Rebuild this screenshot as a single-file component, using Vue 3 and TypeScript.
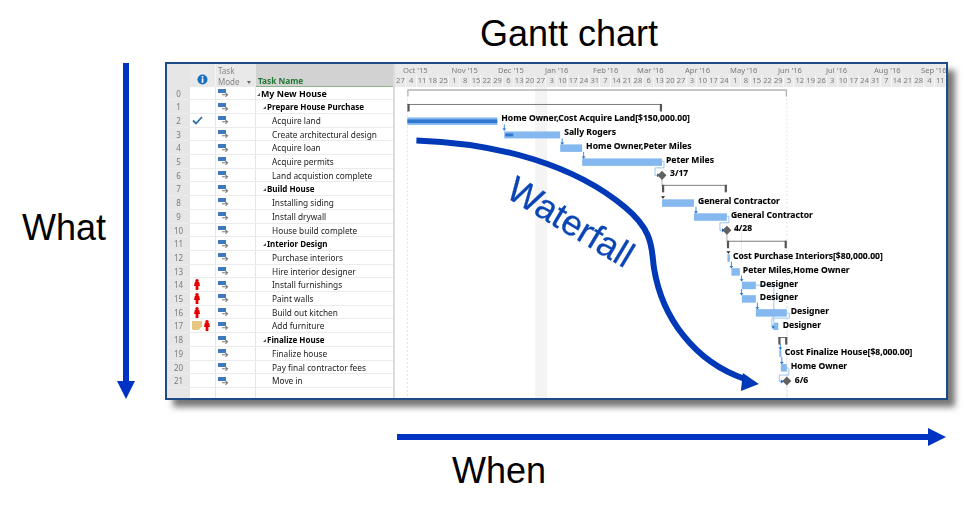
<script setup lang="ts">
interface Task { name: string; kind: 'root' | 'sum' | 'leaf'; done?: boolean; note?: boolean; person?: boolean }
interface Bar { x: number; y: number; w: number; h: number }
interface Label { x: number; y: number; t: string }

const tasks: Task[] = [
  { name: 'My New House', kind: 'root' },
  { name: 'Prepare House Purchase', kind: 'sum' },
  { name: 'Acquire land', kind: 'leaf', done: true },
  { name: 'Create architectural design', kind: 'leaf' },
  { name: 'Acquire loan', kind: 'leaf' },
  { name: 'Acquire permits', kind: 'leaf' },
  { name: 'Land acquistion complete', kind: 'leaf' },
  { name: 'Build House', kind: 'sum' },
  { name: 'Installing siding', kind: 'leaf' },
  { name: 'Install drywall', kind: 'leaf' },
  { name: 'House build complete', kind: 'leaf' },
  { name: 'Interior Design', kind: 'sum' },
  { name: 'Purchase interiors', kind: 'leaf' },
  { name: 'Hire interior designer', kind: 'leaf' },
  { name: 'Install furnishings', kind: 'leaf', person: true },
  { name: 'Paint walls', kind: 'leaf', person: true },
  { name: 'Build out kitchen', kind: 'leaf', person: true },
  { name: 'Add furniture', kind: 'leaf', note: true, person: true },
  { name: 'Finalize House', kind: 'sum' },
  { name: 'Finalize house', kind: 'leaf' },
  { name: 'Pay final contractor fees', kind: 'leaf' },
  { name: 'Move in', kind: 'leaf' },
]

const months = [
  { t: "Oct '15", w: 48.5 }, { t: "Nov '15", w: 46.5 }, { t: "Dec '15", w: 47 }, { t: "Jan '16", w: 48 },
  { t: "Feb '16", w: 44 }, { t: "Mar '16", w: 48 }, { t: "Apr '16", w: 45 }, { t: "May '16", w: 48 },
  { t: "Jun '16", w: 48 }, { t: "Jul '16", w: 48 }, { t: "Aug '16", w: 47 }, { t: "Sep '16", w: 26 },
]

const days: number[] = Array.from({ length: 51 }, (_, i) => new Date(2015, 8, 27 + i * 7).getDate())

const bars: Bar[] = [
  { x: 407, y: 117, w: 90, h: 7.5 }, { x: 504, y: 131, w: 56, h: 7 }, { x: 560, y: 144, w: 22, h: 7.5 },
  { x: 582, y: 158, w: 80, h: 7.5 }, { x: 662, y: 199, w: 32, h: 7.5 }, { x: 694, y: 213, w: 33, h: 7.5 },
  { x: 727.5, y: 254, w: 2.5, h: 7.5 }, { x: 731.5, y: 268, w: 8.5, h: 7.5 }, { x: 742, y: 281.5, w: 14, h: 7.5 },
  { x: 742, y: 295, w: 14, h: 7.5 }, { x: 756, y: 309, w: 31, h: 7.5 }, { x: 773.5, y: 322.5, w: 5, h: 7.5 },
  { x: 779.5, y: 349.5, w: 2, h: 7.5 }, { x: 781, y: 364, w: 6, h: 7.5 },
]
const doneBars: Bar[] = [{ x: 407, y: 119, w: 90, h: 3.6 }, { x: 505, y: 133, w: 8, h: 3 }]
const summaries = [
  { x1: 407, x2: 662, y: 104, c: '#7c7c7c' }, { x1: 662, x2: 727, y: 185, c: '#7c7c7c' },
  { x1: 727, x2: 787, y: 241, c: '#7c7c7c' }, { x1: 778.5, x2: 787.5, y: 337.5, c: '#666' },
]
const diamonds = [{ x: 662, y: 175 }, { x: 727, y: 230 }, { x: 787, y: 381 }]
const links: string[] = [
  '504 124 504 130', '562 138 562 144', '583.5 151.5 583.5 158', '696 206.5 696 213',
  '731.5 261.5 731.5 268', '741.7 275.5 741.7 281', '741.7 289 741.7 295', '757.5 302.5 757.5 309',
  '780.5 344 780.5 349.5', '782 357 782 364',
]
const loops: string[] = [
  '662 161 664 161 664 167.5 655 167.5 655 175 659 175',
  '727 216 729 216 729 222.5 720 222.5 720 230 724 230',
  '787 313 789.5 313 789.5 318 772 318 772 327 774 327',
  '787 368 789 368 789 375 779.5 375 779.5 381.5 783 381.5',
  '756 285 774 285 774 322',
]
const heads = [
  [504, 130], [562, 144], [583.5, 158], [696, 213], [731.5, 268], [741.7, 281], [741.7, 295], [757.5, 309],
  [780.5, 349.5], [782, 364],
]
const labels: Label[] = [
  { x: 501, y: 121, t: 'Home Owner,Cost Acquire Land[$150,000.00]' },
  { x: 564, y: 135, t: 'Sally Rogers' },
  { x: 586, y: 149, t: 'Home Owner,Peter Miles' },
  { x: 666, y: 163, t: 'Peter Miles' },
  { x: 670, y: 176, t: '3/17' },
  { x: 698, y: 204, t: 'General Contractor' },
  { x: 731, y: 218, t: 'General Contractor' },
  { x: 734, y: 231, t: '4/28' },
  { x: 733, y: 259, t: 'Cost Purchase Interiors[$80,000.00]' },
  { x: 743, y: 273, t: 'Peter Miles,Home Owner' },
  { x: 760, y: 287, t: 'Designer' },
  { x: 760, y: 300, t: 'Designer' },
  { x: 791, y: 314, t: 'Designer' },
  { x: 783, y: 328, t: 'Designer' },
  { x: 785, y: 355, t: 'Cost Finalize House[$8,000.00]' },
  { x: 791, y: 369, t: 'Home Owner' },
  { x: 795, y: 383, t: '6/6' },
]
</script>

<template>
  <div class="page">
    <div class="title">Gantt chart</div>

    <div class="middle">
      <div class="side">
        <div class="what">What</div>
        <svg class="down" width="18" height="336" viewBox="0 0 18 336">
          <path d="M6 0H12V318H18L9 336L0 318H6Z" fill="#0033c4" />
        </svg>
      </div>

      <div class="frame">
        <div class="sheet">
          <div class="head">
            <div class="c-num"></div>
            <div class="c-ind">
              <svg width="11" height="11" viewBox="0 0 11 11">
                <circle cx="5.5" cy="5.5" r="5" fill="#1b6ec2" />
                <rect x="4.7" y="2" width="1.7" height="1.6" fill="#fff" />
                <rect x="4.7" y="4.4" width="1.7" height="4.4" fill="#fff" />
              </svg>
            </div>
            <div class="c-mode mode-h">
              <span>Task</span>
              <span>Mode <i class="caret"></i></span>
            </div>
            <div class="c-name name-h">Task Name</div>
          </div>

          <div v-for="(t, i) in tasks" :key="t.name" class="row">
            <div class="c-num">{{ i }}</div>
            <div class="c-ind">
              <svg v-if="t.done" width="11" height="9" viewBox="0 0 11 9">
                <path d="M1 4.5L4 7.5L10 1" fill="none" stroke="#2f6da8" stroke-width="1.8" />
              </svg>
              <svg v-if="t.note" width="10" height="9" viewBox="0 0 10 9">
                <path d="M0 0H10V5.5L6.5 9H1L0 8Z" fill="#e7c67f" />
              </svg>
              <svg v-if="t.person" :class="{ solo: !t.note }" width="6" height="11" viewBox="0 0 6 11">
                <circle cx="3" cy="1.8" r="1.8" fill="#e80000" />
                <path d="M0.8 3H5.2L6 7H4.4V11H1.6V7H0Z" fill="#e80000" />
              </svg>
            </div>
            <div class="c-mode">
              <svg width="11" height="8" viewBox="0 0 11 8">
                <rect x="0" y="0" width="8" height="4" fill="#3f78bd" />
                <path d="M4 5.8H9M7.4 3.8L9.6 5.8L7.4 7.8" fill="none" stroke="#7d7d7d" stroke-width="1.1" />
              </svg>
            </div>
            <div class="c-name" :class="t.kind">
              <i v-if="t.kind !== 'leaf'" class="tri"></i>{{ t.name }}
            </div>
          </div>

          <div class="row filler">
            <div class="c-num"></div>
            <div class="c-ind"></div>
            <div class="c-mode"></div>
            <div class="c-name"></div>
          </div>
        </div>

        <div class="split"></div>

        <div class="chart">
          <div class="scale">
            <div class="months">
              <span v-for="m in months" :key="m.t" :style="{ width: m.w + 'px' }">{{ m.t }}</span>
            </div>
            <div class="days">
              <span v-for="(d, i) in days" :key="i">{{ d }}</span>
            </div>
          </div>

          <svg class="canvas" width="550" height="312" viewBox="395 86.5 550 312">
            <rect x="535" y="86.5" width="12" height="312" fill="#f4f4f4" />
            <path d="M407 90V398M787 90V398" stroke="#e2e2e2" stroke-dasharray="2 2" fill="none" />
            <path d="M741.7 232V262M787 330V398" stroke="#ececec" fill="none" />
            <path d="M662 175V186M727 230V241" stroke="#bdbdbd" stroke-width="1.2" fill="none" />

            <path d="M407.5 96V89.5H786.5V96" fill="none" stroke="#b4b4b4" stroke-width="1.3" />
            <g v-for="s in summaries" :key="s.x1">
              <path :d="`M${s.x1} ${s.y}H${s.x2}`" :stroke="s.c" stroke-width="1" />
              <rect :x="s.x1" :y="s.y - 0.5" width="2.2" height="7.5" fill="#555" />
              <rect :x="s.x2 - 2.2" :y="s.y - 0.5" width="2.2" height="7.5" fill="#555" />
            </g>

            <polyline v-for="l in loops" :key="l" :points="l" fill="none" stroke="#9cc4f2" stroke-width="1" />
            <rect v-for="b in bars" :key="b.x + '-' + b.y" :x="b.x" :y="b.y" :width="b.w" :height="b.h" fill="#86b8f0" />
            <rect v-for="b in doneBars" :key="b.x" :x="b.x" :y="b.y" :width="b.w" :height="b.h" fill="#2f78cf" />
            <polyline v-for="l in links" :key="l" :points="l" fill="none" stroke="#3f8be0" stroke-width="1" />
            <path v-for="h in heads" :key="h[0]" :d="`M${h[0] - 2} ${h[1] - 2}H${h[0] + 2}L${h[0]} ${h[1]}Z`" fill="#1f6fd0" />
            <path d="M661 196H665L663 198.5ZM726.5 251H730.5L728.5 253.5Z" fill="#222" />
            <path d="M657 173V177L660 175ZM722 228V232L725 230ZM781 379.5V383.5L784 381.5ZM772.5 325V329L775 327Z" fill="#1f6fd0" />

            <rect v-for="d in diamonds" :key="d.x" :x="d.x - 3.2" :y="d.y - 3.2" width="6.4" height="6.4" fill="#616161"
              :transform="`rotate(45 ${d.x} ${d.y})`" />

            <text v-for="l in labels" :key="l.x + l.t" :x="l.x" :y="l.y" class="lab">{{ l.t }}</text>

            <path d="M416 140C500 143 575 165 625 207C655 232 651 250 654 268C662 318 695 362 745 379" fill="none"
              stroke="#0039b8" stroke-width="6" />
            <path d="M743 373L759 384L741 391Z" fill="#0039b8" />
            <text x="504" y="196" transform="rotate(31 504 196)" class="fall">Waterfall</text>
          </svg>
        </div>
      </div>
    </div>

    <div class="bottom">
      <svg class="right" width="549" height="18" viewBox="0 0 549 18">
        <path d="M0 6H531V0L549 9L531 18V12H0Z" fill="#0033c4" />
      </svg>
      <div class="when">When</div>
    </div>
  </div>
</template>

<style>
html, body { margin: 0; background: #fff; }
</style>

<style scoped>
.page {
  width: 964px;
  height: 512px;
  overflow: hidden;
  font-family: "Liberation Sans", Arial, sans-serif;
  color: #000;
  background: #fff;
}
.title {
  height: 62px;
  padding-left: 480px;
  box-sizing: border-box;
  font-size: 36px;
  line-height: 68px;
}
.middle { display: flex; height: 338px; isolation: isolate; }
.side { width: 165px; display: flex; flex: none; box-sizing: border-box; padding-left: 22px; }
.what { width: 84px; font-size: 36px; line-height: 40px; margin-top: 146px; }
.down { margin: 1px 0 0 11px; flex: none; }
.frame {
  position: relative;
  width: 783px;
  height: 338px;
  box-sizing: border-box;
  border: 2px solid #1c4b86;
  display: flex;
  background: #fff;
  font-family: "Noto Sans", "Open Sans", sans-serif;
}
.frame::before {
  content: "";
  position: absolute;
  top: 6px;
  left: 6px;
  right: -9px;
  bottom: -9px;
  background: #777;
  filter: blur(3px);
  z-index: -1;
}
.sheet { width: 226px; flex: none; display: flex; flex-direction: column; background: #fff; filter: blur(0.25px); }
.head { display: flex; height: 22.5px; flex: none; background: #e9e9e9; }
.row { display: flex; height: 13.71px; flex: none; border-bottom: 1px solid #ebebeb; box-sizing: border-box; }
.filler { flex: 1; border-bottom: 0; }
.c-num {
  width: 23px;
  flex: none;
  background: #e6e6e6;
  color: #7b7b7b;
  font-size: 8px;
  line-height: 14px;
  text-align: center;
}
.c-ind {
  width: 26px;
  flex: none;
  box-sizing: border-box;
  border-right: 1px solid #e4e4e4;
  display: flex;
  align-items: center;
  justify-content: flex-start;
  padding-left: 2px;
  gap: 2px;
}
.solo { margin-left: 1.5px; }
.c-mode {
  width: 40px;
  flex: none;
  box-sizing: border-box;
  border-right: 1px solid #e4e4e4;
  padding-left: 2px;
  display: flex;
  align-items: center;
}
.c-name {
  width: 137px;
  flex: none;
  font-size: 8.3px;
  line-height: 14px;
  color: #222;
  white-space: nowrap;
  box-sizing: border-box;
  padding-left: 16px;
}
.c-name.root { padding-left: 1px; font-weight: 700; font-size: 8.9px; color: #000; }
.c-name.sum { padding-left: 7px; font-weight: 700; font-size: 8px; color: #000; }
.tri {
  display: inline-block;
  width: 0;
  height: 0;
  border-left: 3px solid transparent;
  border-bottom: 3px solid #555;
  margin-right: 1px;
  vertical-align: 1px;
}
.head .c-ind { border-right-color: #f4f4f4; justify-content: center; padding: 8px 0 0; }
.mode-h {
  flex-direction: column;
  align-items: flex-start;
  font-size: 8px;
  line-height: 10.5px;
  color: #858585;
  padding-top: 2px;
  border-right: 0;
}
.caret {
  display: inline-block;
  width: 0;
  height: 0;
  border: 2.5px solid transparent;
  border-top: 3px solid #666;
  border-bottom: 0;
  margin-left: 5px;
  vertical-align: 1px;
}
.name-h {
  background: #d2d2d2;
  border-bottom: 1.5px solid #8db58d;
  color: #217a33;
  font-size: 8.3px;
  font-weight: 700;
  padding: 10px 0 0 2px;
}
.split { width: 2px; flex: none; background: #dcdcdc; }
.chart { width: 550px; flex: none; display: flex; flex-direction: column; }
.scale { height: 22.5px; flex: none; background: #e9e9e9; color: #7b7b7b; font-size: 7.6px; filter: blur(0.2px); }
.months { display: flex; height: 11px; padding-left: 8px; line-height: 12px; white-space: nowrap; }
.months span { flex: none; }
.days { display: flex; height: 11.5px; line-height: 11px; }
.days span { width: 10.8px; flex: none; text-align: center; box-shadow: inset -1px 0 0 #f6f6f6; }
.canvas { display: block; filter: blur(0.2px); }
.lab { font-family: "Noto Sans", "Open Sans", sans-serif; font-size: 8.6px; font-weight: 700; fill: #000; stroke: #000; stroke-width: 0.1px; }
.fall { font-family: "Liberation Sans", Arial, sans-serif; font-size: 36px; fill: #0b46b4; stroke: #0b46b4; stroke-width: 0.3px; }
.bottom { padding-top: 28px; }
.right { display: block; margin-left: 397px; }
.when { margin: 5px 0 0 452px; font-size: 36px; line-height: 40px; }
</style>
